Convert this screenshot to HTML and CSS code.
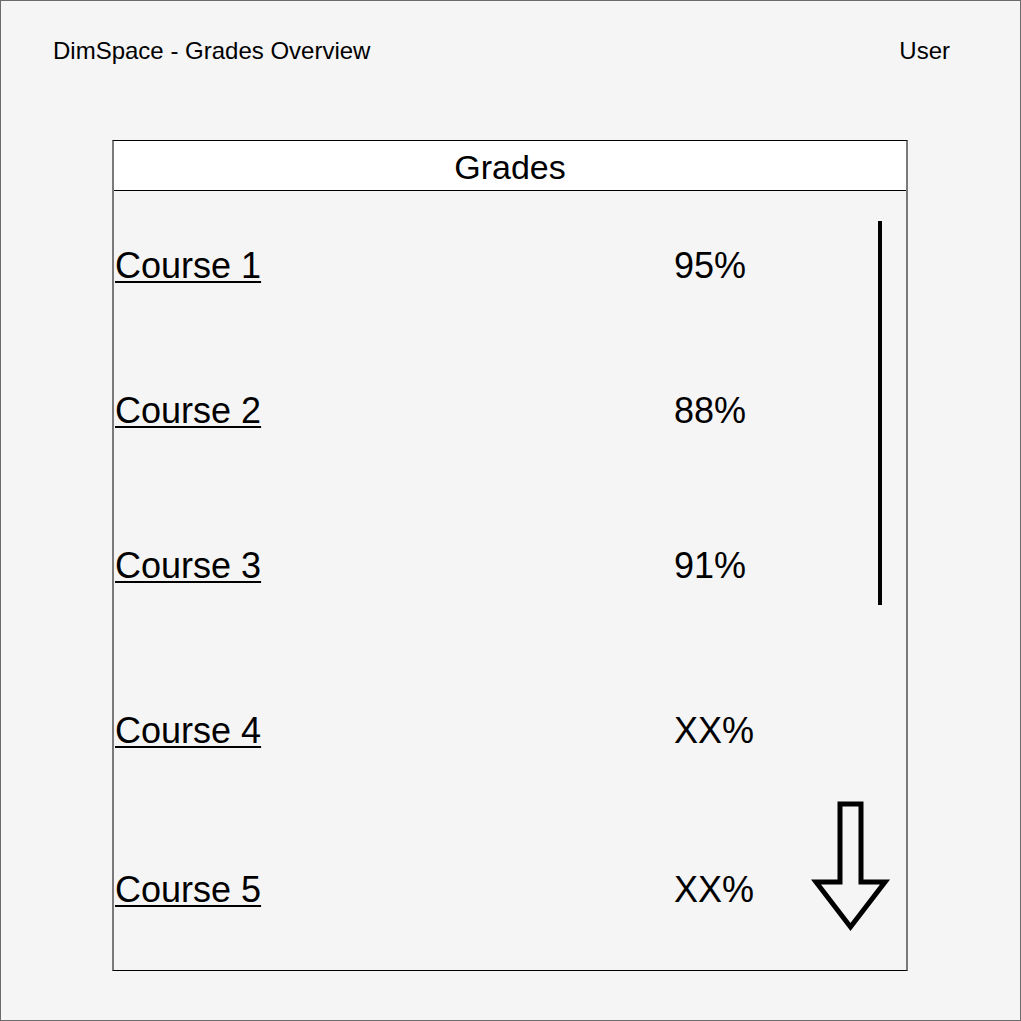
FILE: index.html
```html
<!DOCTYPE html>
<html>
<head>
<meta charset="utf-8">
<link rel="stylesheet" href="styles.css">
</head>
<body>
<div class="page">
  <div class="topbar">
    <span class="title">DimSpace - Grades Overview</span>
    <span class="user">User</span>
  </div>
  <div class="panel">
    <div class="panel-head">Grades</div>
    <div class="panel-body">
      <div class="row r1"><a class="course" href="#">Course 1</a><span class="grade">95%</span></div>
      <div class="row r2"><a class="course" href="#">Course 2</a><span class="grade">88%</span></div>
      <div class="row r3"><a class="course" href="#">Course 3</a><span class="grade">91%</span></div>
      <div class="row r4"><a class="course" href="#">Course 4</a><span class="grade">XX%</span></div>
      <div class="row r5"><a class="course" href="#">Course 5</a><span class="grade">XX%</span></div>
      <div class="scrollbar"></div>
      <svg class="arrow" width="80" height="140" viewBox="0 0 80 140">
        <polygon points="29,5 50,5 50,83 74,83 39.5,128 5,83 29,83" fill="none" stroke="#000" stroke-width="5" stroke-linejoin="miter" stroke-miterlimit="10"/>
      </svg>
    </div>
  </div>
</div>
</body>
</html>
```
FILE: styles.css
```css
html, body {
  margin: 0;
  padding: 0;
  background: #f5f5f5;
}
.page {
  width: 1021px;
  height: 1021px;
  box-sizing: border-box;
  border: 1px solid #6b6b6b;
  background: #f5f5f5;
  font-family: "Liberation Sans", Arial, sans-serif;
  color: #000;
}
.topbar {
  display: flex;
  justify-content: space-between;
  padding: 36px 70px 0 52px;
  font-size: 24px;
  line-height: 28px;
}
.panel {
  margin: 75px 0 0 111px;
  width: 796px;
  height: 831px;
  box-sizing: border-box;
  border-top: 1px solid #000;
  border-bottom: 1px solid #000;
  border-left: 2px solid #7a7a7a;
  border-right: 2px solid #7a7a7a;
  display: flex;
  flex-direction: column;
}
.panel-head {
  height: 50px;
  box-sizing: border-box;
  background: #fff;
  border-bottom: 1px solid #000;
  display: flex;
  align-items: center;
  justify-content: center;
  font-size: 34px;
  line-height: 40px;
  padding-top: 3px;
}
.panel-body {
  position: relative;
  flex: 1;
}
.row {
  display: grid;
  grid-template-columns: 560px 1fr;
  font-size: 36px;
  line-height: 40px;
  height: 40px;
}
.r1 { margin-top: 55px; }
.r2 { margin-top: 105px; }
.r3 { margin-top: 115px; }
.r4 { margin-top: 125px; }
.r5 { margin-top: 119px; }
.course {
  color: #000;
  text-decoration: underline;
  text-decoration-thickness: 2px;
  text-underline-offset: 3px;
  padding-left: 1px;
}
.grade {
  color: #000;
}
.scrollbar {
  position: absolute;
  left: 764px;
  top: 30px;
  width: 4px;
  height: 384px;
  background: #000;
}
.arrow {
  position: absolute;
  left: 697px;
  top: 608px;
}
```
